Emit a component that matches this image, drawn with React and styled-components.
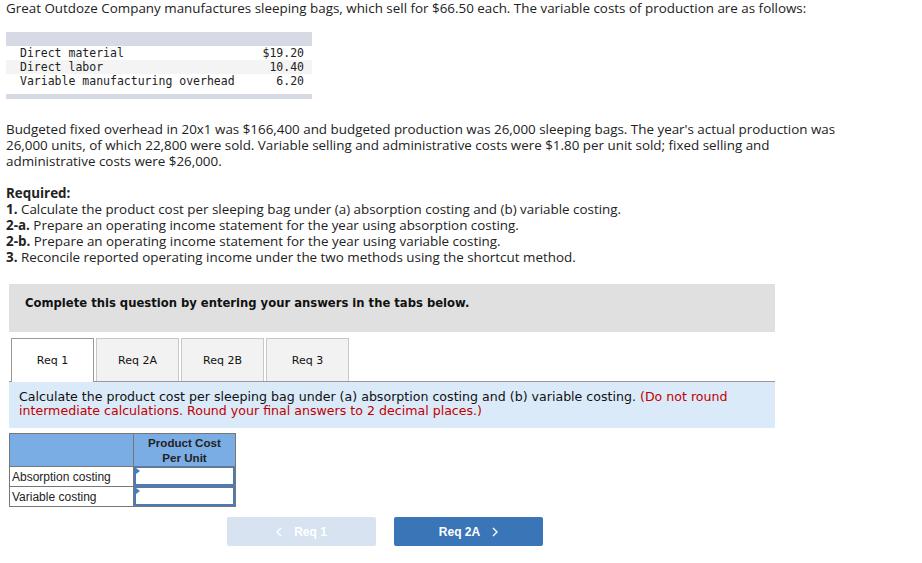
import React from 'react';
import styled, { createGlobalStyle } from 'styled-components';

const GlobalStyle = createGlobalStyle`
  body {
    margin: 0;
    background: #fff;
    font-family: "Open Sans", Lato, sans-serif;
    color: #222;
  }
`;

const Page = styled.div`
  width: 922px;
  padding: 0 0 0 6px;
  box-sizing: border-box;
`;

const Para = styled.p`
  margin: ${p => p.$m || '0'};
  font-size: 13.4px;
  line-height: 16px;
  color: #222;
  width: 840px;
`;

const CostTable = styled.div`
  width: 306px;
  margin: 16px 0 0 0;
  font-family: "DejaVu Sans Mono", "Liberation Mono", monospace;
  font-size: 11.5px;
  color: #222;
`;

const Bar = styled.div`
  height: ${p => p.$h}px;
  background: #d6dae4;
`;

const Spacer = styled.div`
  height: ${p => p.$h}px;
`;

const CostRow = styled.div`
  display: flex;
  justify-content: space-between;
  height: 14px;
  line-height: 14px;
  padding: 0 8px 0 14px;
  background: ${p => (p.$alt ? '#f4f4f4' : '#fff')};
`;

const Required = styled.div`
  margin-top: 16px;
  font-size: 13.4px;
  line-height: 16px;
`;

const ReqLine = styled.div`
  white-space: nowrap;
  b { font-weight: 700; }
`;

const Notice = styled.div`
  margin: 19px 0 0 3px;
  width: 766px;
  height: 48px;
  background: #e0e0e0;
  padding: 11px 0 0 16px;
  box-sizing: border-box;
  font-family: "DejaVu Sans", Verdana, sans-serif;
  font-weight: 700;
  font-size: 11.6px;
  line-height: 16px;
  color: #111;
`;

const Tabs = styled.div`
  display: flex;
  gap: 2px;
  margin: 6px 0 0 5px;
  align-items: flex-end;
`;

const Tab = styled.div`
  width: 83px;
  box-sizing: border-box;
  border: 1px solid ${p => (p.$active ? '#999' : '#c8c8c8')};
  border-bottom: none;
  background: ${p => (p.$active ? '#fff' : '#f2f2f2')};
  display: flex;
  align-items: center;
  justify-content: center;
  font-family: "DejaVu Sans", Verdana, sans-serif;
  font-size: 11px;
  color: #111;
  position: relative;
  z-index: ${p => (p.$active ? 1 : 0)};
  margin-bottom: ${p => (p.$active ? '-1px' : '0')};
  height: ${p => (p.$active ? '44px' : '43px')};
`;

const Panel = styled.div`
  margin-left: 3px;
  width: 766px;
  height: 47px;
  box-sizing: border-box;
  background: #dbeaf8;
  border-top: 1px solid #999;
  padding: 8px 0 0 10px;
  font-family: "DejaVu Sans", Verdana, sans-serif;
  font-size: 12.6px;
  line-height: 14px;
  color: #111;
`;

const Warn = styled.span`
  color: #c00000;
`;

const AnswerTable = styled.table`
  margin: 5px 0 0 3px;
  border-collapse: collapse;
  table-layout: fixed;
  width: 226px;
  font-family: "Liberation Sans", Arial, sans-serif;
  font-size: 12px;
  color: #222;
`;

const HeadCell = styled.th`
  background: #7aade4;
  border: 1px solid #777;
  height: 32px;
  padding: 0;
  font-weight: 700;
  font-size: 11.6px;
  line-height: 15px;
  color: #222;
`;

const LabelCell = styled.td`
  border: 1px solid #777;
  height: 19px;
  padding: 0 0 0 2px;
  text-align: left;
`;

const InputCell = styled.td`
  border: 1px solid #777;
  padding: 0;
  height: 19px;
`;

const InputBox = styled.div`
  height: 19px;
  box-sizing: border-box;
  border: 2px solid #4a7ab8;
  border-top-width: 1px;
  background: #fff;
  position: relative;
  &::before {
    content: '';
    position: absolute;
    left: 0;
    top: 0;
    border-left: 4px solid #3b7fd4;
    border-top: 3px solid transparent;
    border-bottom: 3px solid transparent;
  }
`;

const Nav = styled.div`
  display: flex;
  gap: 18px;
  margin: 10px 0 0 221px;
`;

const NavButton = styled.div`
  width: 149px;
  height: 29px;
  border-radius: 2px;
  background: ${p => (p.$disabled ? '#d7e3f1' : '#3a75b8')};
  color: #fff;
  display: flex;
  align-items: center;
  justify-content: center;
  gap: 12px;
  font-family: "Liberation Sans", Arial, sans-serif;
  font-weight: 700;
  font-size: 12px;
`;

const Chevron = ({ dir }) => (
  <svg width="6" height="10" viewBox="0 0 6 10">
    <path
      d={dir === 'left' ? 'M5 1 L1 5 L5 9' : 'M1 1 L5 5 L1 9'}
      fill="none"
      stroke="#fff"
      strokeWidth="1.4"
    />
  </svg>
);

export default function App() {
  return (
    <Page>
      <GlobalStyle />
      <Para>
        Great Outdoze Company manufactures sleeping bags, which sell for $66.50 each. The variable costs of production are as follows:
      </Para>
      <CostTable>
        <Bar $h={14} />
        <CostRow><span>Direct material</span><span>$19.20</span></CostRow>
        <CostRow $alt><span>Direct labor</span><span>10.40</span></CostRow>
        <CostRow><span>Variable manufacturing overhead</span><span>6.20</span></CostRow>
        <Spacer $h={6} />
        <Bar $h={5} />
      </CostTable>
      <Para $m="22px 0 0 0">
        Budgeted fixed overhead in 20x1 was $166,400 and budgeted production was 26,000 sleeping bags. The year's actual production was 26,000 units, of which 22,800 were sold. Variable selling and administrative costs were $1.80 per unit sold; fixed selling and administrative costs were $26,000.
      </Para>
      <Required>
        <ReqLine><b>Required:</b></ReqLine>
        <ReqLine><b>1.</b> Calculate the product cost per sleeping bag under (a) absorption costing and (b) variable costing.</ReqLine>
        <ReqLine><b>2-a.</b> Prepare an operating income statement for the year using absorption costing.</ReqLine>
        <ReqLine><b>2-b.</b> Prepare an operating income statement for the year using variable costing.</ReqLine>
        <ReqLine><b>3.</b> Reconcile reported operating income under the two methods using the shortcut method.</ReqLine>
      </Required>
      <Notice>Complete this question by entering your answers in the tabs below.</Notice>
      <Tabs>
        <Tab $active>Req 1</Tab>
        <Tab>Req 2A</Tab>
        <Tab>Req 2B</Tab>
        <Tab>Req 3</Tab>
      </Tabs>
      <Panel>
        Calculate the product cost per sleeping bag under (a) absorption costing and (b) variable costing. <Warn>(Do not round intermediate calculations. Round your final answers to 2 decimal places.)</Warn>
      </Panel>
      <AnswerTable>
        <colgroup>
          <col style={{ width: 124 }} />
          <col style={{ width: 102 }} />
        </colgroup>
        <thead>
          <tr>
            <HeadCell />
            <HeadCell>Product Cost<br />Per Unit</HeadCell>
          </tr>
        </thead>
        <tbody>
          <tr>
            <LabelCell>Absorption costing</LabelCell>
            <InputCell><InputBox /></InputCell>
          </tr>
          <tr>
            <LabelCell>Variable costing</LabelCell>
            <InputCell><InputBox /></InputCell>
          </tr>
        </tbody>
      </AnswerTable>
      <Nav>
        <NavButton $disabled><Chevron dir="left" />Req 1</NavButton>
        <NavButton>Req 2A<Chevron dir="right" /></NavButton>
      </Nav>
    </Page>
  );
}
